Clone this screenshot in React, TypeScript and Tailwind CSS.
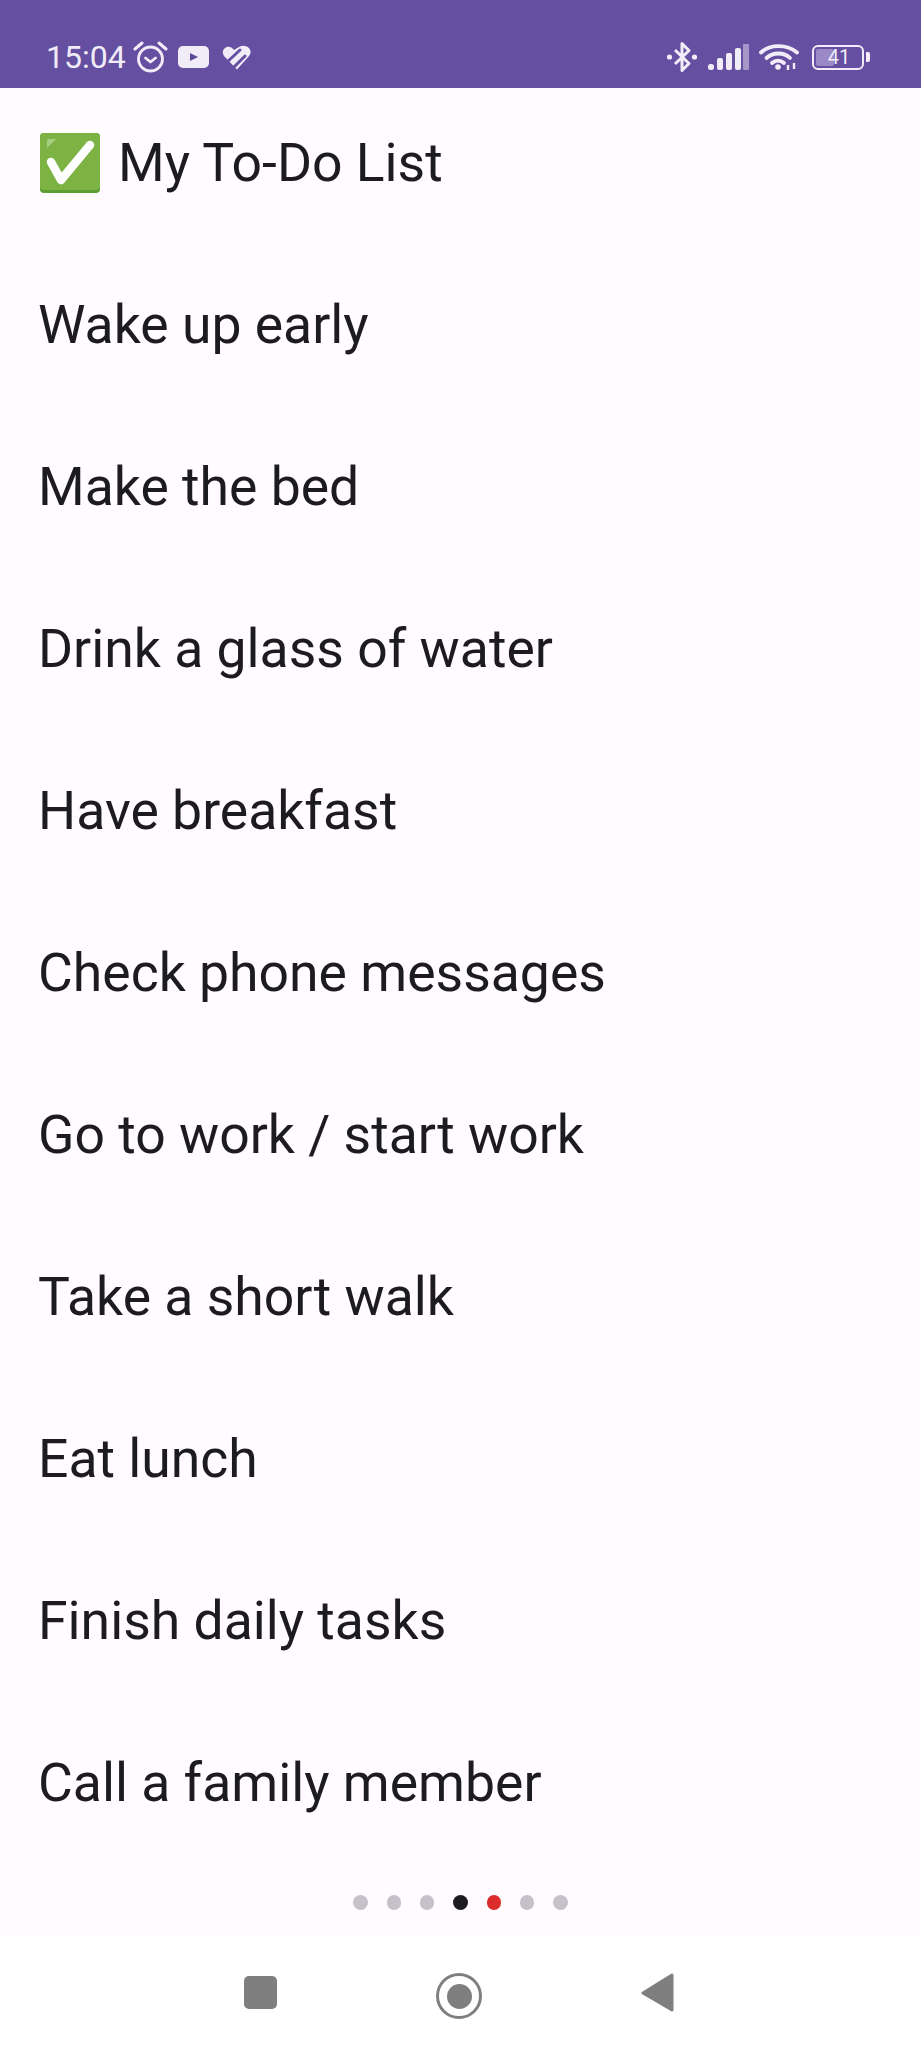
const items = [
  "Wake up early",
  "Make the bed",
  "Drink a glass of water",
  "Have breakfast",
  "Check phone messages",
  "Go to work / start work",
  "Take a short walk",
  "Eat lunch",
  "Finish daily tasks",
  "Call a family member",
];

function Alarm() {
  return (
    <svg width="35" height="32" viewBox="0 0 35 32" fill="none" stroke="#f1edf8" strokeWidth="2.8" strokeLinecap="round" strokeLinejoin="round">
      <circle cx="17.5" cy="18" r="12" />
      <path d="M12.5 17l5 4 5-4" />
      <path d="M2 8 9 2M33 8 26 2" strokeWidth="3" />
    </svg>
  );
}

function YouTube() {
  return (
    <svg width="31" height="22" viewBox="0 0 31 22">
      <rect width="31" height="22" rx="5" fill="#f1edf8" />
      <path d="M12 7l8 4-8 4z" fill="#5f4a9b" />
    </svg>
  );
}

function Heart() {
  return (
    <svg width="30" height="25" viewBox="0 0 30 25" fill="none">
      <path d="M15 24.5 2 11C-2 5 5-1 10 3l2 2 5-3C24-2 32 5 27 11Z" fill="#f1edf8" />
      <path d="M3 19 18 5" stroke="#654fa1" strokeWidth="3" strokeLinecap="round" />
      <path d="M10 24 23 11" stroke="#654fa1" strokeWidth="3" strokeLinecap="round" />
    </svg>
  );
}

function Bluetooth() {
  return (
    <svg width="32" height="34" viewBox="0 0 32 34" fill="none" stroke="#f1edf8" strokeWidth="3" strokeLinejoin="round">
      <path d="M9 10 23 23.5l-7 7V3.5l7 7L9 24" />
      <circle cx="3.5" cy="17" r="2.6" fill="#f1edf8" stroke="none" />
      <circle cx="28.5" cy="17" r="2.6" fill="#f1edf8" stroke="none" />
    </svg>
  );
}

function Signal() {
  return (
    <svg width="41" height="26" viewBox="0 0 41 26">
      <rect x="0" y="20" width="6" height="6" rx="2.5" fill="#f1edf8" />
      <rect x="9" y="14" width="6" height="12" rx="2" fill="#f1edf8" />
      <rect x="18" y="9" width="6" height="17" rx="2" fill="#f1edf8" />
      <rect x="27" y="4" width="6" height="22" rx="2" fill="#f1edf8" />
      <rect x="35" y="0" width="6" height="26" rx="1" fill="#a697c9" />
    </svg>
  );
}

function Wifi() {
  return (
    <svg width="40" height="26" viewBox="0 0 40 26" fill="none" stroke="#f1edf8" strokeWidth="3.8" strokeLinecap="round">
      <path d="M2 8.5C11 0 28 0 38 8.5" />
      <path d="M7.5 14C14 8 25 8 31 14" />
      <path d="M13 19C16.5 16 21.5 16 25 19" />
      <circle cx="19" cy="23" r="2.8" fill="#f1edf8" stroke="none" />
      <path d="M29 26v-5M35 19v6" strokeWidth="2.4" strokeLinecap="butt" />
    </svg>
  );
}

function Battery() {
  return (
    <div className="flex items-center gap-[2px]">
      <div className="relative flex h-[25px] w-[52px] items-center justify-center rounded-[6px] border-[2px] border-[#f1edf8]">
        <div className="absolute bottom-[2px] left-[2px] top-[2px] w-[18px] rounded-[2px] bg-[#9a89c6]" />
        <span className="relative ml-[2px] text-[20px] leading-none text-[#f1edf8]">41</span>
      </div>
      <div className="h-[10px] w-[4px] rounded-r-[2px] bg-[#f1edf8]" />
    </div>
  );
}

function CheckEmoji() {
  return (
    <svg width="60" height="60" viewBox="0 0 60 60" className="ml-[2px] shrink-0">
      <rect width="60" height="60" rx="4" fill="#5c9e31" />
      <rect width="60" height="57" rx="4" fill="#7cb342" />
      <path d="M8 6h8l-9 9V8z" fill="#a5cf7e" />
      <path d="M11 29 21 47 50 12" fill="none" stroke="#ffffff" strokeWidth="8.5" strokeLinecap="round" strokeLinejoin="round" />
    </svg>
  );
}

export default function App() {
  const dots = ["bg-[#c5c1c8]", "bg-[#c5c1c8]", "bg-[#c5c1c8]", "bg-[#1c1b1f]", "bg-[#db2b2b]", "bg-[#c5c1c8]", "bg-[#c5c1c8]"];
  return (
    <div className="flex h-[2048px] w-[921px] flex-col overflow-hidden bg-[#fffbfe] font-['Roboto',sans-serif]">
      <div className="flex h-[88px] items-center justify-between bg-[#654fa1] pl-[46px] pr-[51px] pt-[26px]">
        <div className="flex items-center">
          <span className="text-[32px] leading-none text-[#f1edf8]">15:04</span>
          <div className="ml-[7px]"><Alarm /></div>
          <div className="ml-[10px]"><YouTube /></div>
          <div className="ml-[13px]"><Heart /></div>
        </div>
        <div className="flex items-center">
          <Bluetooth />
          <div className="ml-[10px]"><Signal /></div>
          <div className="ml-[10px]"><Wifi /></div>
          <div className="ml-[13px]"><Battery /></div>
        </div>
      </div>

      <div className="flex flex-1 flex-col bg-[#fffbfe]">
        <div className="flex flex-col gap-[91px] pl-[38px] pt-[39px] text-[53.5px] leading-[71px] text-[#1c1b1f]">
          <div className="flex items-center gap-[18px]">
            <CheckEmoji />
            <span>My To-Do List</span>
          </div>
          {items.map((t) => (
            <div key={t}>{t}</div>
          ))}
        </div>
        <div className="mt-auto flex h-[41px] items-start justify-center gap-[18.8px]">
          {dots.map((c, i) => (
            <div key={i} className={`h-[14.5px] w-[14.5px] rounded-full ${c}`} />
          ))}
        </div>
      </div>

      <div className="flex h-[112px] items-start bg-white pl-[244px] pt-[37px]">
        <div className="mt-[3px] h-[33px] w-[33px] rounded-[5px] bg-[#7f7f7f]" />
        <div className="ml-[159px] flex h-[46px] w-[46px] items-center justify-center rounded-full border-[3px] border-[#7f7f7f]">
          <div className="h-[25px] w-[25px] rounded-full bg-[#7f7f7f]" />
        </div>
        <svg width="34" height="40" viewBox="0 0 34 40" className="ml-[159px]">
          <path d="M31 2 2 20l29 17z" fill="#7f7f7f" stroke="#7f7f7f" strokeWidth="3" strokeLinejoin="round" />
        </svg>
      </div>
    </div>
  );
}
